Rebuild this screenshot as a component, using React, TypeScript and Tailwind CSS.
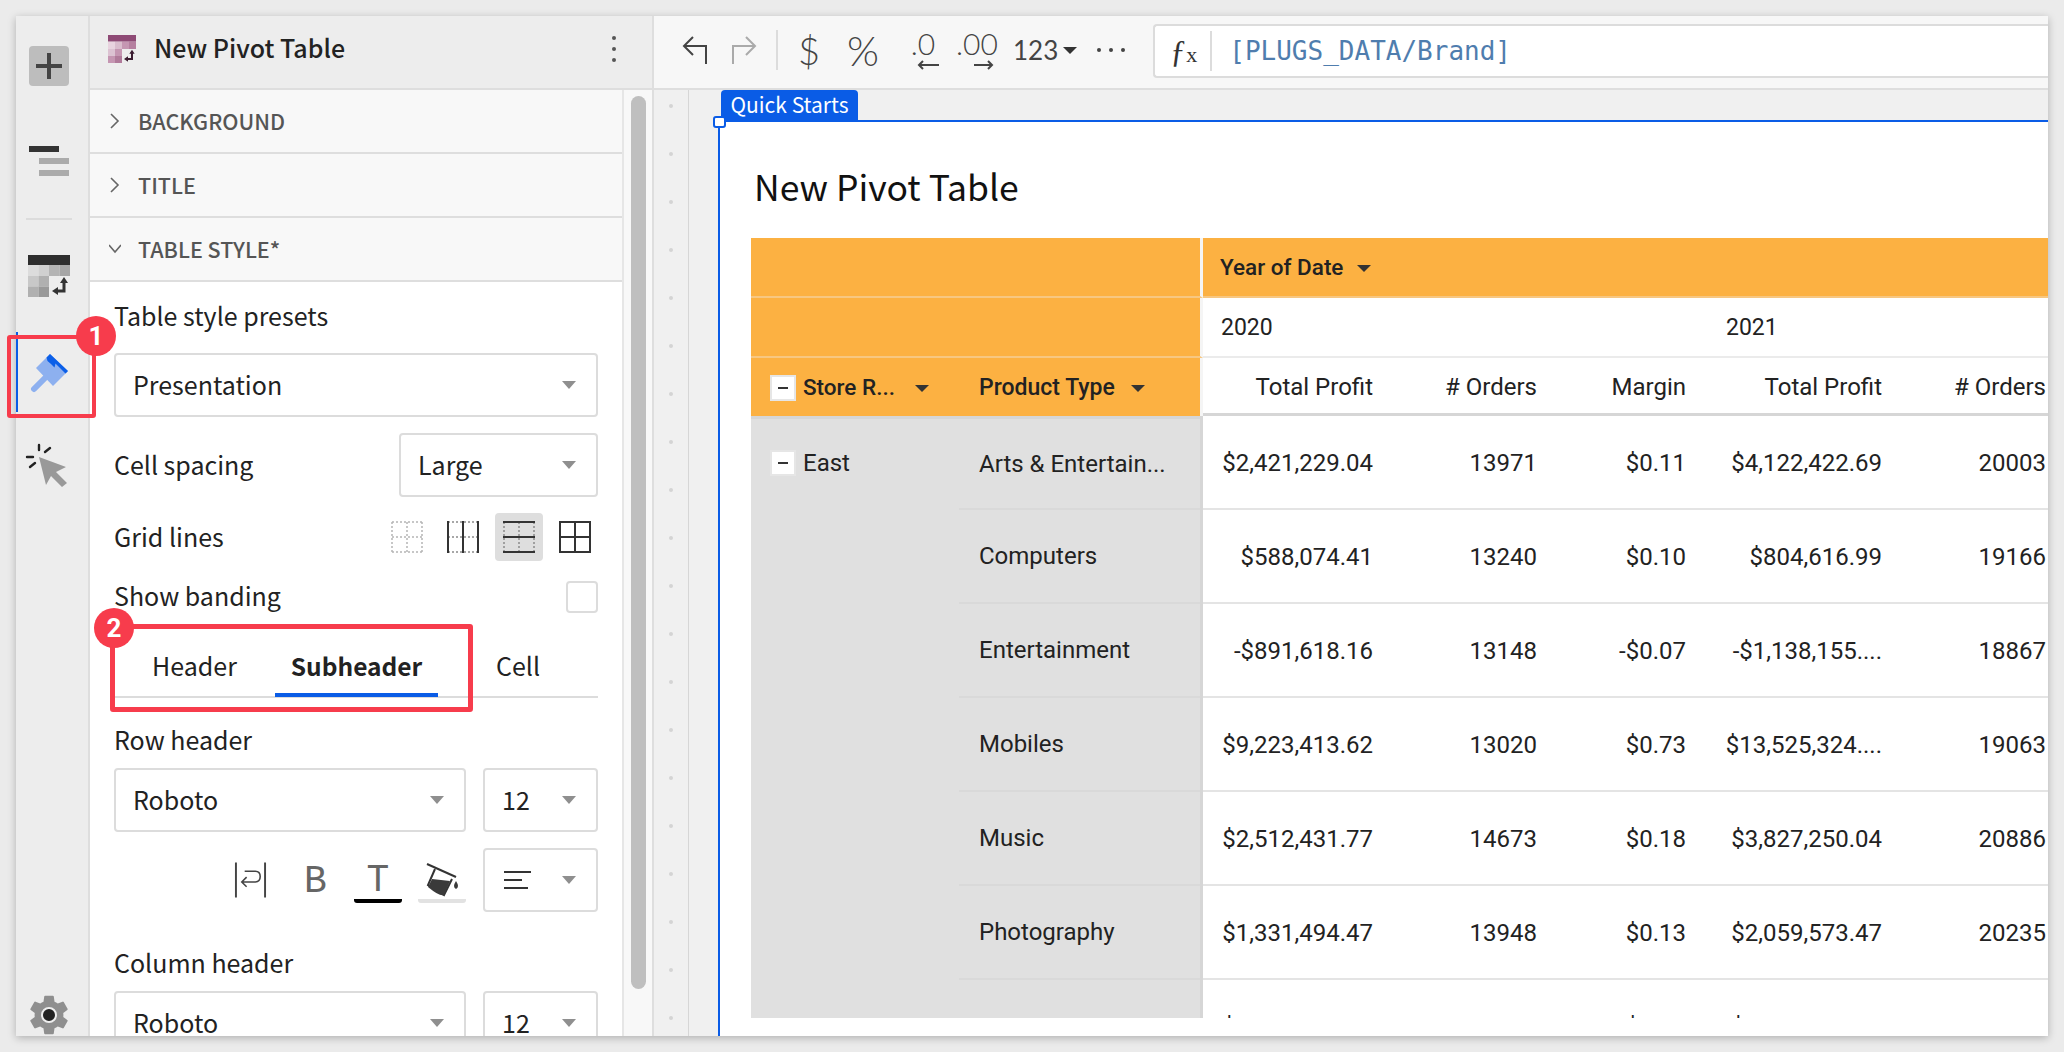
import type { ReactNode } from "react";
import { MdSettings } from "react-icons/md";

const ui = "font-['Noto_Sans_CJK_SC','Source_Sans_Pro',sans-serif]";

const widths = ["w-[189px]", "w-[164px]", "w-[149px]", "w-[196px]", "w-[164px]"];

const rows = [
  ["Arts & Entertain...", "$2,421,229.04", "13971", "$0.11", "$4,122,422.69", "20003"],
  ["Computers", "$588,074.41", "13240", "$0.10", "$804,616.99", "19166"],
  ["Entertainment", "-$891,618.16", "13148", "-$0.07", "-$1,138,155....", "18867"],
  ["Mobiles", "$9,223,413.62", "13020", "$0.73", "$13,525,324....", "19063"],
  ["Music", "$2,512,431.77", "14673", "$0.18", "$3,827,250.04", "20886"],
  ["Photography", "$1,331,494.47", "13948", "$0.13", "$2,059,573.47", "20235"],
  ["", "$1,111,111.11", "", "$0.11", "$1,111,111.11", ""],
];

function Caret({ dark }: { dark?: boolean }) {
  return (
    <span
      className={
        dark
          ? "inline-block h-0 w-0 border-x-[7px] border-t-[7px] border-x-transparent border-t-[#333]"
          : "inline-block h-0 w-0 border-x-[7px] border-t-[8px] border-x-transparent border-t-[#8f8f8f]"
      }
    />
  );
}

function Select({ value, className, children }: { value?: string; className: string; children?: ReactNode }) {
  return (
    <div className={`flex h-16 shrink-0 items-center justify-between rounded-[4px] border-2 border-[#dcdcdc] bg-white pr-[20px] pl-[17px] text-[25px] text-[#222] ${className}`}>
      {children ?? <span className="pb-[3px]">{value}</span>}
      <Caret />
    </div>
  );
}

function Section({ title, open }: { title: string; open?: boolean }) {
  return (
    <div className="flex h-16 shrink-0 items-center border-b-2 border-[#dedede] bg-[#f8f8f8] pl-[19px] text-[21.5px] font-medium text-[#555]">
      <svg width="12" height="20" viewBox="0 0 12 20" fill="none" stroke="#666" strokeWidth="1.6" className="mr-[17px]">
        {open ? <path d="M0 6l6 7 6-7" /> : <path d="M2 3l7 7-7 7" />}
      </svg>
      {title}
    </div>
  );
}

function GridIcon({ kind }: { kind: number }) {
  const solidV = kind === 1 || kind === 3;
  const solidH = kind === 2 || kind === 3;
  return (
    <svg width="32" height="32" viewBox="0 0 32 32" fill="none" strokeWidth="2" className="shrink-0">
      <g stroke={kind === 0 ? "#b5b5b5" : "#8a8a8a"} strokeWidth="1.5" strokeDasharray="2 2">
        <path d="M1 1H31M1 16H31M1 31H31M1 1V31M16 1V31M31 1V31" />
      </g>
      {solidV && <path d="M1 0V32M16 0V32M31 0V32" stroke="#333" />}
      {solidH && <path d="M0 1H32M0 16H32M0 31H32" stroke="#333" />}
    </svg>
  );
}

function TableGlyph({ bar, cells, arrow }: { bar: string; cells: string[]; arrow: string }) {
  return (
    <svg viewBox="0 0 42 42" className="h-full w-full">
      <rect width="42" height="10" fill={bar} />
      <rect x="0" y="10" width="10.5" height="11" fill={cells[0]} />
      <rect x="10.5" y="10" width="10.5" height="11" fill={cells[1]} />
      <rect x="21" y="10" width="10.5" height="11" fill={cells[2]} />
      <rect x="31.5" y="10" width="10.5" height="11" fill={cells[3]} />
      <rect x="0" y="21" width="10.5" height="10.5" fill={cells[4]} />
      <rect x="10.5" y="21" width="10.5" height="10.5" fill={cells[5]} />
      <rect x="0" y="31.5" width="10.5" height="10.5" fill={cells[6]} />
      <rect x="10.5" y="31.5" width="10.5" height="10.5" fill={cells[7]} />
      <path d="M36 26V36H27" fill="none" stroke={arrow} strokeWidth="3" />
      <path d="M36 22l-4 6h8zM24 36l6-4v8z" fill={arrow} />
    </svg>
  );
}

function Badge({ n, className }: { n: string; className: string }) {
  return (
    <div className={`absolute flex h-10 w-10 items-center justify-center rounded-full bg-[#f73c4c] font-['Roboto',sans-serif] text-[26px] font-bold text-white ${className}`}>
      {n}
    </div>
  );
}

function Rail() {
  return (
    <div className="relative flex w-[74px] shrink-0 flex-col border-r-2 border-[#dedede] bg-[#ededed]">
      <div className="mt-[30px] ml-[13px] flex h-10 w-10 items-center justify-center rounded-[4px] bg-[#bdbdbd]">
        <svg width="26" height="26" viewBox="0 0 26 26" fill="#444">
          <rect x="11" y="0" width="4" height="26" />
          <rect x="0" y="11" width="26" height="4" />
        </svg>
      </div>
      <div className="mt-[60px] ml-[13px] flex w-10 flex-col gap-[6px]">
        <div className="h-[6px] w-[30px] bg-[#333]" />
        <div className="ml-[10px] h-[6px] w-[30px] bg-[#ababab]" />
        <div className="ml-[10px] h-[6px] w-[30px] bg-[#ababab]" />
      </div>
      <div className="mt-[42px] ml-[10px] h-[2px] w-[46px] bg-[#dcdcdc]" />
      <div className="mt-[35px] ml-[12px] h-[42px] w-[42px]">
        <TableGlyph bar="#2e2e2e" cells={["#dcdcdc", "#d0d0d0", "#b4b4b4", "#a6a6a6", "#c8c8c8", "#b0b0b0", "#b0b0b0", "#999"]} arrow="#333" />
      </div>
      <div className="relative mt-[35px] h-20 w-full">
        <div className="absolute top-0 left-0 h-full w-[2px] bg-[#0a5ce6]" />
        <svg viewBox="30 350 40 45" className="absolute top-[18px] left-[14px] h-[45px] w-10">
          <path d="M50 354L68 371L53 386L36 368Z" fill="#8db0ef" />
          <path d="M50 354L68 371L65.5 373.5L55.5 363.5L54.5 367.5L51 364L47.5 361L46.5 357.5Z" fill="#0b5fe8" />
          <path d="M45 378L34 389" stroke="#8db0ef" strokeWidth="6" strokeLinecap="round" />
        </svg>
      </div>
      <svg viewBox="25 443 44 46" className="mt-[30px] ml-[9px] h-[46px] w-[44px]">
        <path d="M39 458L66 468L56 473L67 484L62 488L51 477L46 486Z" fill="#999" />
        <path d="M39 446V451M50 449L45 453M27 458H33M30 468L35 464" stroke="#222" strokeWidth="2.4" strokeLinecap="round" />
      </svg>
      <div className="absolute top-[975px] left-[9px] text-[#8f8f8f]">
        <div className="relative h-[48px] w-[48px]">
          <MdSettings size={48} />
          <div className="absolute top-[16px] left-[16px] h-4 w-4 rounded-full border-[2px] border-[#eee] bg-[#222]" />
        </div>
      </div>
    </div>
  );
}

function Panel() {
  return (
    <div className={`flex w-[564px] shrink-0 flex-col border-r-2 border-[#dedede] bg-[#f8f8f8] ${ui}`}>
      <div className="flex h-[74px] shrink-0 items-center justify-between border-b-2 border-[#dedede] bg-[#ededed] pr-[36px] pb-[6px] pl-[18px]">
        <div className="flex items-center">
          <div className="h-[28px] w-[28px]">
            <TableGlyph bar="#8e4a75" cells={["#e8d3df", "#d9bccd", "#c596b2", "#b57f9f", "#dcc2d2", "#c596b2", "#c596b2", "#b07a9a"]} arrow="#3b1c30" />
          </div>
          <span className="ml-[18px] pb-[3px] text-[25px] font-medium text-[#222]">New Pivot Table</span>
        </div>
        <div className="flex flex-col gap-[7px]">
          <div className="h-[4px] w-[4px] rounded-full bg-[#555]" />
          <div className="h-[4px] w-[4px] rounded-full bg-[#555]" />
          <div className="h-[4px] w-[4px] rounded-full bg-[#555]" />
        </div>
      </div>
      <div className="relative flex flex-1 overflow-hidden">
        <div className="flex w-[534px] shrink-0 flex-col border-r-2 border-[#e6e6e6] bg-white">
          <Section title="BACKGROUND" />
          <Section title="TITLE" />
          <Section title="TABLE STYLE*" open />
          <div className="flex flex-col px-6 text-[25px] leading-[36px] text-[#222]">
            <div className="mt-[15px]">Table style presets</div>
            <Select value="Presentation" className="mt-5" />
            <div className="mt-4 flex items-center justify-between">
              <span className="pb-[3px]">Cell spacing</span>
              <Select value="Large" className="w-[199px]" />
            </div>
            <div className="mt-4 flex h-12 items-center justify-between">
              <span className="pb-[2px]">Grid lines</span>
              <div className="mr-[-1px] flex items-center">
                <GridIcon kind={0} />
                <div className="ml-6"><GridIcon kind={1} /></div>
                <div className="ml-4 flex h-12 w-12 items-center justify-center rounded-[4px] bg-[#dedede]"><GridIcon kind={2} /></div>
                <div className="ml-2 flex h-12 w-12 items-center justify-center"><GridIcon kind={3} /></div>
              </div>
            </div>
            <div className="mt-5 flex h-8 items-center justify-between">
              <span className="pb-[4px]">Show banding</span>
              <div className="h-8 w-8 rounded-[4px] border-2 border-[#dcdcdc]" />
            </div>
            <div className="flex h-[85px] items-end border-b-2 border-[#dcdcdc] text-center">
              <div className="h-[49px] w-[161px]">Header</div>
              <div className="mb-[-1px] h-[49px] w-[163px] border-b-[4px] border-[#0a5ce6] text-[24.5px] font-bold">Subheader</div>
              <div className="h-[49px] w-[160px]">Cell</div>
            </div>
            <div className="mt-[23px]">Row header</div>
            <div className="mt-[11px] flex justify-between">
              <Select value="Roboto" className="w-[352px]" />
              <Select value="12" className="w-[115px]" />
            </div>
            <div className="mt-4 flex h-16 items-center">
              <svg width="34" height="36" viewBox="0 0 34 36" fill="none" stroke="#444" strokeWidth="2" className="ml-[120px]">
                <path d="M2 0V36M32 0V36" />
                <path d="M11 9H22Q27 9 27 14.5T22 20H8M13 15L8 20L13 25" strokeWidth="1.6" />
              </svg>
              <div className="ml-[37px] w-5 pt-[4px] text-center font-['Liberation_Mono',monospace] text-[38px] leading-none text-[#666]">B</div>
              <div className="ml-[30px] flex w-12 flex-col items-center pt-[6px]">
                <span className="h-[34px] pt-[1px] font-['Liberation_Mono',monospace] text-[38px] leading-[34px] text-[#666]">T</span>
                <div className="mt-[2px] h-1 w-12 rounded-b-[3px] bg-black" />
              </div>
              <div className="ml-4 flex w-12 flex-col items-center pt-[6px]">
                <svg width="36" height="34" viewBox="0 0 36 34" fill="none">
                  <path d="M3 1L32 14" stroke="#333" strokeWidth="2" />
                  <path d="M11 6L4 22L20 32L28 16" stroke="#333" strokeWidth="2" />
                  <path d="M8 16L26 18L20 32Q16 34 4 24Z" fill="#3a3a3a" />
                  <path d="M32 18Q36 24 32 26Q28 24 32 18Z" fill="#3a3a3a" />
                </svg>
                <div className="mt-[2px] h-1 w-12 rounded-b-[3px] bg-[#e2e2e2]" />
              </div>
              <Select className="ml-[17px] w-[115px]">
                <svg width="28" height="20" viewBox="0 0 28 20" fill="none" stroke="#333" strokeWidth="2" className="ml-[2px]">
                  <path d="M0 2H27M0 10H18M0 18H24" />
                </svg>
              </Select>
            </div>
            <div className="mt-[32px]">Column header</div>
            <div className="mt-[11px] flex justify-between">
              <Select value="Roboto" className="w-[352px]" />
              <Select value="12" className="w-[115px]" />
            </div>
          </div>
        </div>
        <div className="flex-1 pt-[6px] pl-[7px]">
          <div className="h-[893px] w-[15px] rounded-full bg-[#bfbfbf]" />
        </div>
      </div>
    </div>
  );
}

function Toolbar() {
  return (
    <div className={`flex h-[74px] shrink-0 items-center border-b-2 border-[#dedede] bg-[#f7f7f7] pb-[4px] text-[#444] ${ui}`}>
      <svg width="26" height="28" viewBox="0 0 26 28" fill="none" stroke="#444" strokeWidth="2" className="ml-[28px]">
        <path d="M24 28V10H2M11 1L2 10L11 19" />
      </svg>
      <svg width="26" height="28" viewBox="0 0 26 28" fill="none" stroke="#aaa" strokeWidth="2" className="ml-[23px]">
        <path d="M2 28V10H24M15 1L24 10L15 19" />
      </svg>
      <div className="ml-[19px] h-10 w-[2px] bg-[#dcdcdc]" />
      <span className="ml-[20px] w-5 text-center font-['Lato',sans-serif] text-[38px] font-light leading-none">$</span>
      <span className="ml-[27px] w-[36px] text-center font-['Lato',sans-serif] text-[41px] font-light leading-none">%</span>
      <div className="ml-[25px] flex w-[34px] flex-col items-center">
        <span className="h-[26px] font-['Lato',sans-serif] text-[30px] font-light leading-[24px]">.0</span>
        <svg width="22" height="10" viewBox="0 0 22 10" fill="none" stroke="#444" strokeWidth="2" className="mt-[3px] ml-[10px]">
          <path d="M22 5H2M6 1L2 5L6 9" />
        </svg>
      </div>
      <div className="ml-[17px] flex w-[40px] flex-col items-center">
        <span className="h-[26px] font-['Lato',sans-serif] text-[30px] font-light leading-[24px]">.00</span>
        <svg width="20" height="10" viewBox="0 0 20 10" fill="none" stroke="#444" strokeWidth="2" className="mt-[3px] ml-[14px]">
          <path d="M0 5H18M14 1L18 5L14 9" />
        </svg>
      </div>
      <span className="ml-[16px] font-['Lato',sans-serif] text-[26px] leading-none">123</span>
      <span className="ml-[5px] flex"><Caret dark /></span>
      <div className="ml-[20px] flex gap-[8px]">
        <div className="h-[4px] w-[4px] rounded-full bg-[#444]" />
        <div className="h-[4px] w-[4px] rounded-full bg-[#444]" />
        <div className="h-[4px] w-[4px] rounded-full bg-[#444]" />
      </div>
      <div className="mt-[2px] ml-[28px] flex h-[54px] flex-1 items-center rounded-l-[4px] border-y-2 border-l-2 border-[#dcdcdc] bg-white">
        <span className="ml-[15px] w-[26px] font-['Liberation_Serif',serif] text-[32px] leading-none text-[#333]">
          ƒ<span className="text-[22px]">x</span>
        </span>
        <div className="ml-[14px] h-10 w-[2px] bg-[#dcdcdc]" />
        <span className="ml-[17px] font-['DejaVu_Sans_Mono',monospace] text-[26px] leading-none text-[#4f7dae]">[PLUGS_DATA/Brand]</span>
      </div>
    </div>
  );
}

function MinusBox() {
  return (
    <div className="flex h-[26px] w-[26px] shrink-0 items-center justify-center border-2 border-[#e6e6e6] bg-white">
      <div className="h-[2px] w-[10px] bg-[#333]" />
    </div>
  );
}

function PivotTable() {
  return (
    <div className="mt-[26px] ml-[31px] flex h-[780px] overflow-hidden font-['Roboto',sans-serif] text-[24px] text-[#222]">
      <div className="flex w-[452px] shrink-0 flex-col">
        <div className="h-[60px] shrink-0 border-r-[3px] border-b-2 border-r-[#f5f5f5] border-b-[#f7c781] bg-[#fcb142]" />
        <div className="h-[60px] shrink-0 border-r-[3px] border-b-2 border-r-[#f5f5f5] border-b-[#f7c781] bg-[#fcb142]" />
        <div className="flex h-[58px] shrink-0 items-center border-r-[3px] border-r-[#f5f5f5] bg-[#fcb142] pt-[2px] text-[22.5px] font-medium">
          <div className="flex w-[208px] items-center pl-[19px]">
            <MinusBox />
            <span className="ml-[7px]">Store R...</span>
            <span className="ml-[20px] flex"><Caret dark /></span>
          </div>
          <div className="flex items-center pl-5">
            <span className="text-[23px]">Product Type</span>
            <span className="ml-[16px] flex"><Caret dark /></span>
          </div>
        </div>
        <div className="flex flex-1 border-t-[3px] border-r-[3px] border-[#d6d6d6] bg-[#e0e0e0]">
          <div className="flex w-[208px] shrink-0 items-start pt-[31px] pl-[19px]">
            <MinusBox />
            <span className="ml-[7px] leading-[26px]">East</span>
          </div>
          <div className="flex-1">
            {rows.map((r, i) => (
              <div key={i} className={`flex items-center border-b-2 border-[#d9d9d9] pl-5 ${i === 0 ? "h-[91px]" : "h-[94px]"}`}>
                {r[0]}
              </div>
            ))}
          </div>
        </div>
      </div>
      <div className="flex min-w-0 flex-1 flex-col">
        <div className="flex h-[60px] shrink-0 items-center gap-[14px] border-b-2 border-[#f7c781] bg-[#fcb142] pt-[2px] pl-[17px] text-[22.5px] font-medium">
          Year of Date
          <Caret dark />
        </div>
        <div className="flex h-[60px] shrink-0 items-center border-b-2 border-[#ebebeb] pt-[2px] pl-[18px] text-[23px]">
          <span className="w-[505px]">2020</span>
          <span>2021</span>
        </div>
        <div className="flex h-[58px] shrink-0 border-b-[3px] border-[#d6d6d6] pt-[2px]">
          {["Total Profit", "# Orders", "Margin", "Total Profit", "# Orders"].map((h, i) => (
            <div key={i} className={`flex shrink-0 items-center justify-end pr-[19px] ${widths[i]}`}>{h}</div>
          ))}
        </div>
        {rows.map((r, i) => (
          <div key={i} className="flex h-[94px] shrink-0 border-b-2 border-[#e4e4e4] pt-[2px]">
            {r.slice(1).map((v, j) => (
              <div key={j} className={`flex shrink-0 items-center justify-end pr-[19px] ${widths[j]}`}>{v}</div>
            ))}
          </div>
        ))}
      </div>
    </div>
  );
}

function Canvas() {
  return (
    <div className="flex min-h-0 flex-1 overflow-hidden bg-[#f0f0f0]">
      <div className="flex w-[35px] shrink-0 flex-col items-center gap-11 border-r border-[#d6d6d6] pt-[14px]">
        {Array.from({ length: 20 }).map((_, i) => (
          <div key={i} className="h-1 w-1 shrink-0 rounded-full bg-[#d4d4d4]" />
        ))}
      </div>
      <div className="ml-[29px] flex min-w-0 flex-1 flex-col">
        <div className="h-[30px] shrink-0 pl-[1px]">
          <div className={`ml-[2px] flex h-[30px] w-[137px] items-center justify-center rounded-t-[4px] bg-[#0a5ce6] text-[21px] text-white ${ui}`}>
            Quick Starts
          </div>
        </div>
        <div className="relative flex-1 border-t-2 border-l-2 border-[#0a5ce6] bg-white">
          <div className="absolute top-[-6px] left-[-7px] h-3 w-[13px] rounded-[3px] border-2 border-[#0a5ce6] bg-white" />
          <div className={`mt-[42px] ml-[34px] h-[48px] text-[35.5px] leading-[44px] text-[#111] ${ui}`}>New Pivot Table</div>
          <PivotTable />
        </div>
      </div>
    </div>
  );
}

export default function App() {
  return (
    <div className="relative h-[1052px] w-[2064px] overflow-hidden bg-[#ebebeb] pt-4 pl-4">
      <div className="flex h-[1020px] w-[2032px] overflow-hidden shadow-[0_2px_8px_rgba(0,0,0,0.25)]">
        <Rail />
        <Panel />
        <div className="flex min-w-0 flex-1 flex-col">
          <Toolbar />
          <Canvas />
        </div>
      </div>
      <div className="absolute top-[335px] left-[7px] h-[83px] w-[89px] rounded-[3px] border-4 border-[#f73c4c]" />
      <Badge n="1" className="top-[316px] left-[76px]" />
      <div className="absolute top-[624px] left-[110px] h-[88px] w-[363px] rounded-[3px] border-[5px] border-[#f73c4c]" />
      <Badge n="2" className="top-[608px] left-[94px]" />
    </div>
  );
}
